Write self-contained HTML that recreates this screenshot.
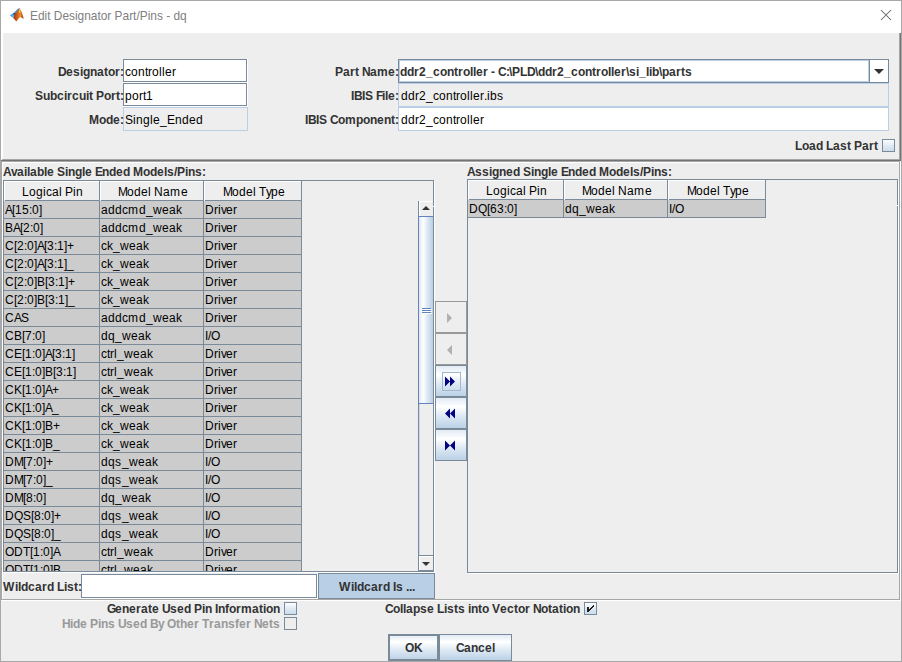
<!DOCTYPE html>
<html><head><meta charset="utf-8"><title>Edit Designator Part/Pins - dq</title>
<style>
html,body{margin:0;padding:0;width:902px;height:662px;overflow:hidden;background:#eeeeee}
.a{position:absolute;box-sizing:border-box}
.t{position:absolute;white-space:pre;font-family:"Liberation Sans",sans-serif;font-size:12px;line-height:1.117}
.t i{font-style:normal;display:inline-block}
.w1{width:1px}.w2{width:2px}.w3{width:3px}.w4{width:4px}.w5{width:5px}.w6{width:6px}.w7{width:7px}.w8{width:8px}.w9{width:9px}.w10{width:10px}.w11{width:11px}.w12{width:12px}.w13{width:13px}.w14{width:14px}.w15{width:15px}.w16{width:16px}.w17{width:17px}.w18{width:18px}.w19{width:19px}
</style></head><body>
<div class="a" style="left:0px;top:0px;width:902px;height:662px;background:#eeeeee"></div>
<div class="a" style="left:0px;top:0px;width:902px;height:33px;background:#ffffff"></div>
<div class="a" style="left:0px;top:0px;width:902px;height:1px;background:#a8a8a8"></div>
<div class="a" style="left:0px;top:661px;width:902px;height:1px;background:#a8a8a8"></div>
<div class="a" style="left:0px;top:0px;width:1px;height:662px;background:#a8a8a8"></div>
<div class="a" style="left:901px;top:0px;width:1px;height:662px;background:#a8a8a8"></div>
<svg class="a" style="left:6px;top:5px" width="22" height="20" viewBox="0 0 22 20">
<defs>
<linearGradient id="mb" x1="0" y1="0" x2="1" y2="0"><stop offset="0" stop-color="#9c3416"/><stop offset="0.4" stop-color="#d2601c"/><stop offset="0.68" stop-color="#e8922a"/><stop offset="0.85" stop-color="#c8501a"/><stop offset="1" stop-color="#a83414"/></linearGradient>
<linearGradient id="mw" x1="0" y1="1" x2="1" y2="0"><stop offset="0" stop-color="#6cc6f2"/><stop offset="0.5" stop-color="#3a8fd6"/><stop offset="1" stop-color="#2a6fc0"/></linearGradient>
</defs>
<path d="M7.1 12.8 L10.3 16.6 L13.9 12.1 L17.8 13.8 L15.7 7 L13.6 3.1 L8.5 8.8 Z" fill="url(#mb)"/>
<path d="M3.6 10.4 L8.2 7.6 L11.5 4.2 L13.6 3.1 L12.6 4.8 L8.5 8.8 L7.1 12.8 Z" fill="url(#mw)"/>
<path d="M7.6 8.2 L9.3 7.9 L8.6 9.8 L7.5 9.6 Z" fill="#1c2f66"/>
<path d="M13.3 4.2 L14.2 4.6 L14.1 8 L13.2 7.6 Z" fill="#f6dc3a"/>
</svg>
<div class="t" style="left:30px;top:10px;font-size:11.9px;color:#808080;letter-spacing:0">Edit Designator Part/Pins - dq</div>
<svg class="a" style="left:880px;top:9px" width="12" height="12" viewBox="0 0 12 12"><path d="M1 1 L11 11 M11 1 L1 11" stroke="#666" stroke-width="1.05"/></svg>
<div class="a" style="left:1px;top:33px;width:1px;height:128px;background:#ffffff"></div>
<div class="a" style="left:2px;top:33px;width:1px;height:127px;background:#ffffff"></div>
<div class="a" style="left:2px;top:159px;width:899px;height:1px;background:#a6a6a6"></div>
<div class="a" style="left:1px;top:160px;width:900px;height:1px;background:#747474"></div>
<div class="a" style="left:899px;top:33px;width:1px;height:127px;background:#a6a6a6"></div>
<div class="a" style="left:900px;top:33px;width:1px;height:128px;background:#747474"></div>
<div class="a" style="left:123px;top:59px;width:125px;height:24px;background:#ffffff"></div>
<div class="a" style="left:123px;top:59px;width:124px;height:23px;box-shadow:inset 0 0 0 1px #7a8a99"></div>
<div class="a" style="left:247px;top:60px;width:1px;height:23px;background:#ffffff"></div>
<div class="a" style="left:124px;top:82px;width:124px;height:1px;background:#ffffff"></div>
<div class="a" style="left:123px;top:83px;width:125px;height:24px;background:#ffffff"></div>
<div class="a" style="left:123px;top:83px;width:124px;height:23px;box-shadow:inset 0 0 0 1px #7a8a99"></div>
<div class="a" style="left:247px;top:84px;width:1px;height:23px;background:#ffffff"></div>
<div class="a" style="left:124px;top:106px;width:124px;height:1px;background:#ffffff"></div>
<div class="a" style="left:123px;top:107px;width:125px;height:24px;background:#eeeeee"></div>
<div class="a" style="left:123px;top:107px;width:125px;height:24px;box-shadow:inset 0 0 0 1px #b8cfe5"></div>
<div class="t" style="left:58px;top:66px;font-weight:bold;color:#333333"><i class="w8">D</i><i class="w7">e</i><i class="w7">s</i><i class="w3">i</i><i class="w7">g</i><i class="w7">n</i><i class="w7">a</i><i class="w4">t</i><i class="w7">o</i><i class="w5">r</i><i class="w3">:</i></div>
<div class="t" style="left:35px;top:90px;font-weight:bold;color:#333333"><i class="w8">S</i><i class="w7">u</i><i class="w7">b</i><i class="w7">c</i><i class="w3">i</i><i class="w5">r</i><i class="w7">c</i><i class="w7">u</i><i class="w3">i</i><i class="w4">t</i><i class="w3"> </i><i class="w8">P</i><i class="w7">o</i><i class="w5">r</i><i class="w4">t</i><i class="w3">:</i></div>
<div class="t" style="left:89px;top:114px;font-weight:bold;color:#333333"><i class="w10">M</i><i class="w7">o</i><i class="w7">d</i><i class="w7">e</i><i class="w3">:</i></div>
<div class="t" style="left:125px;top:66px;font-weight:normal;color:#000"><i class="w6">c</i><i class="w7">o</i><i class="w7">n</i><i class="w3">t</i><i class="w4">r</i><i class="w7">o</i><i class="w3">l</i><i class="w3">l</i><i class="w7">e</i><i class="w4">r</i></div>
<div class="t" style="left:125px;top:90px;font-weight:normal;color:#000"><i class="w7">p</i><i class="w7">o</i><i class="w4">r</i><i class="w3">t</i><i class="w7">1</i></div>
<div class="t" style="left:125px;top:114px;font-weight:normal;color:#000"><i class="w8">S</i><i class="w3">i</i><i class="w7">n</i><i class="w7">g</i><i class="w3">l</i><i class="w7">e</i><i class="w7">_</i><i class="w8">E</i><i class="w7">n</i><i class="w7">d</i><i class="w7">e</i><i class="w7">d</i></div>
<div class="a" style="left:398px;top:59px;width:491px;height:24px;background:#ffffff"></div>
<div class="a" style="left:398px;top:59px;width:491px;height:24px;box-shadow:inset 0 0 0 1px #7a8a99"></div>
<div class="a" style="left:399px;top:60px;width:470px;height:22px;box-shadow:inset 0 0 0 1px #b8cfe5"></div>
<div class="a" style="left:869px;top:60px;width:1px;height:22px;background:#7a8a99"></div>
<svg class="a" style="left:874px;top:69px" width="10" height="5" viewBox="0 0 10 5"><path d="M0 0 H10 L5 5 Z" fill="#333"/></svg>
<div class="a" style="left:398px;top:83px;width:491px;height:24px;background:#eeeeee"></div>
<div class="a" style="left:398px;top:83px;width:491px;height:24px;box-shadow:inset 0 0 0 1px #b8cfe5"></div>
<div class="a" style="left:398px;top:107px;width:491px;height:24px;background:#ffffff"></div>
<div class="a" style="left:398px;top:107px;width:491px;height:24px;box-shadow:inset 0 0 0 1px #b8cfe5"></div>
<div class="t" style="left:335px;top:66px;font-weight:bold;color:#333333"><i class="w8">P</i><i class="w7">a</i><i class="w5">r</i><i class="w4">t</i><i class="w3"> </i><i class="w8">N</i><i class="w7">a</i><i class="w11">m</i><i class="w7">e</i><i class="w3">:</i></div>
<div class="t" style="left:351px;top:90px;font-weight:bold;color:#333333"><i class="w3">I</i><i class="w8">B</i><i class="w3">I</i><i class="w8">S</i><i class="w3"> </i><i class="w6">F</i><i class="w3">i</i><i class="w3">l</i><i class="w7">e</i><i class="w3">:</i></div>
<div class="t" style="left:305px;top:114px;font-weight:bold;color:#333333"><i class="w3">I</i><i class="w8">B</i><i class="w3">I</i><i class="w8">S</i><i class="w3"> </i><i class="w8">C</i><i class="w7">o</i><i class="w11">m</i><i class="w7">p</i><i class="w7">o</i><i class="w7">n</i><i class="w7">e</i><i class="w7">n</i><i class="w4">t</i><i class="w3">:</i></div>
<div class="t" style="left:400px;top:66px;font-weight:bold;color:#333333"><i class="w7">d</i><i class="w7">d</i><i class="w5">r</i><i class="w7">2</i><i class="w7">_</i><i class="w7">c</i><i class="w7">o</i><i class="w7">n</i><i class="w4">t</i><i class="w5">r</i><i class="w7">o</i><i class="w3">l</i><i class="w3">l</i><i class="w7">e</i><i class="w5">r</i><i class="w3"> </i><i class="w4">-</i><i class="w3"> </i><i class="w8">C</i><i class="w3">:</i><i class="w3">\</i><i class="w8">P</i><i class="w7">L</i><i class="w8">D</i><i class="w3">\</i><i class="w7">d</i><i class="w7">d</i><i class="w5">r</i><i class="w7">2</i><i class="w7">_</i><i class="w7">c</i><i class="w7">o</i><i class="w7">n</i><i class="w4">t</i><i class="w5">r</i><i class="w7">o</i><i class="w3">l</i><i class="w3">l</i><i class="w7">e</i><i class="w5">r</i><i class="w3">\</i><i class="w7">s</i><i class="w3">i</i><i class="w7">_</i><i class="w3">l</i><i class="w3">i</i><i class="w7">b</i><i class="w3">\</i><i class="w7">p</i><i class="w7">a</i><i class="w5">r</i><i class="w4">t</i><i class="w7">s</i></div>
<div class="t" style="left:401px;top:90px;font-weight:normal;color:#000"><i class="w7">d</i><i class="w7">d</i><i class="w4">r</i><i class="w7">2</i><i class="w7">_</i><i class="w6">c</i><i class="w7">o</i><i class="w7">n</i><i class="w3">t</i><i class="w4">r</i><i class="w7">o</i><i class="w3">l</i><i class="w3">l</i><i class="w7">e</i><i class="w4">r</i><i class="w3">.</i><i class="w3">i</i><i class="w7">b</i><i class="w7">s</i></div>
<div class="t" style="left:401px;top:114px;font-weight:normal;color:#000"><i class="w7">d</i><i class="w7">d</i><i class="w4">r</i><i class="w7">2</i><i class="w7">_</i><i class="w6">c</i><i class="w7">o</i><i class="w7">n</i><i class="w3">t</i><i class="w4">r</i><i class="w7">o</i><i class="w3">l</i><i class="w3">l</i><i class="w7">e</i><i class="w4">r</i></div>
<div class="t" style="left:795px;top:140px;font-weight:bold;color:#333333"><i class="w7">L</i><i class="w7">o</i><i class="w7">a</i><i class="w7">d</i><i class="w3"> </i><i class="w7">L</i><i class="w7">a</i><i class="w7">s</i><i class="w4">t</i><i class="w3"> </i><i class="w8">P</i><i class="w7">a</i><i class="w5">r</i><i class="w4">t</i></div>
<div class="a" style="left:882px;top:139px;width:13px;height:13px;background:linear-gradient(#ffffff 0%, #f4f8fc 20%, #dde8f3 55%, #c8daec 100%)"></div>
<div class="a" style="left:882px;top:139px;width:13px;height:13px;box-shadow:inset 0 0 0 1px #7a8a99"></div>
<div class="a" style="left:1px;top:161px;width:1px;height:440px;background:#a6a6a6"></div>
<div class="a" style="left:2px;top:162px;width:1px;height:438px;background:#ffffff"></div>
<div class="a" style="left:1px;top:161px;width:899px;height:1px;background:#a6a6a6"></div>
<div class="a" style="left:2px;top:162px;width:897px;height:1px;background:#ffffff"></div>
<div class="a" style="left:2px;top:599px;width:898px;height:1px;background:#a6a6a6"></div>
<div class="a" style="left:1px;top:600px;width:900px;height:1px;background:#ffffff"></div>
<div class="a" style="left:899px;top:161px;width:1px;height:439px;background:#a6a6a6"></div>
<div class="a" style="left:900px;top:161px;width:1px;height:440px;background:#ffffff"></div>
<div class="t" style="left:3px;top:166px;font-weight:bold;color:#333333"><i class="w8">A</i><i class="w6">v</i><i class="w7">a</i><i class="w3">i</i><i class="w3">l</i><i class="w7">a</i><i class="w7">b</i><i class="w3">l</i><i class="w7">e</i><i class="w3"> </i><i class="w8">S</i><i class="w3">i</i><i class="w7">n</i><i class="w7">g</i><i class="w3">l</i><i class="w7">e</i><i class="w3"> </i><i class="w7">E</i><i class="w7">n</i><i class="w7">d</i><i class="w7">e</i><i class="w7">d</i><i class="w3"> </i><i class="w10">M</i><i class="w7">o</i><i class="w7">d</i><i class="w7">e</i><i class="w3">l</i><i class="w7">s</i><i class="w3">/</i><i class="w8">P</i><i class="w3">i</i><i class="w7">n</i><i class="w7">s</i><i class="w3">:</i></div>
<div class="t" style="left:467px;top:166px;font-weight:bold;color:#333333"><i class="w8">A</i><i class="w7">s</i><i class="w7">s</i><i class="w3">i</i><i class="w7">g</i><i class="w7">n</i><i class="w7">e</i><i class="w7">d</i><i class="w3"> </i><i class="w8">S</i><i class="w3">i</i><i class="w7">n</i><i class="w7">g</i><i class="w3">l</i><i class="w7">e</i><i class="w3"> </i><i class="w7">E</i><i class="w7">n</i><i class="w7">d</i><i class="w7">e</i><i class="w7">d</i><i class="w3"> </i><i class="w10">M</i><i class="w7">o</i><i class="w7">d</i><i class="w7">e</i><i class="w3">l</i><i class="w7">s</i><i class="w3">/</i><i class="w8">P</i><i class="w3">i</i><i class="w7">n</i><i class="w7">s</i><i class="w3">:</i></div>
<div class="a" style="left:4px;top:181px;width:414px;height:390px;overflow:hidden;background:#eeeeee"><div class="a" style="left:-4px;top:-181px;width:902px;height:662px">
<div class="a" style="left:4px;top:181px;width:96px;height:20px;background:#eeeeee"></div>
<div class="a" style="left:4px;top:181px;width:95px;height:1px;background:#ffffff"></div>
<div class="a" style="left:4px;top:181px;width:1px;height:19px;background:#ffffff"></div>
<div class="a" style="left:99px;top:181px;width:1px;height:20px;background:#7a8a99"></div>
<div class="a" style="left:5px;top:200px;width:95px;height:1px;background:#7a8a99"></div>
<div class="t" style="left:22px;top:186px;font-weight:normal;color:#000"><i class="w7">L</i><i class="w7">o</i><i class="w7">g</i><i class="w3">i</i><i class="w6">c</i><i class="w7">a</i><i class="w3">l</i><i class="w3"> </i><i class="w8">P</i><i class="w3">i</i><i class="w7">n</i></div>
<div class="a" style="left:100px;top:181px;width:104px;height:20px;background:#eeeeee"></div>
<div class="a" style="left:100px;top:181px;width:103px;height:1px;background:#ffffff"></div>
<div class="a" style="left:100px;top:181px;width:1px;height:19px;background:#ffffff"></div>
<div class="a" style="left:203px;top:181px;width:1px;height:20px;background:#7a8a99"></div>
<div class="a" style="left:101px;top:200px;width:103px;height:1px;background:#7a8a99"></div>
<div class="t" style="left:118px;top:186px;font-weight:normal;color:#000"><i class="w9">M</i><i class="w7">o</i><i class="w7">d</i><i class="w7">e</i><i class="w3">l</i><i class="w3"> </i><i class="w9">N</i><i class="w7">a</i><i class="w11">m</i><i class="w7">e</i></div>
<div class="a" style="left:204px;top:181px;width:98px;height:20px;background:#eeeeee"></div>
<div class="a" style="left:204px;top:181px;width:97px;height:1px;background:#ffffff"></div>
<div class="a" style="left:204px;top:181px;width:1px;height:19px;background:#ffffff"></div>
<div class="a" style="left:301px;top:181px;width:1px;height:20px;background:#7a8a99"></div>
<div class="a" style="left:205px;top:200px;width:97px;height:1px;background:#7a8a99"></div>
<div class="t" style="left:223px;top:186px;font-weight:normal;color:#000"><i class="w9">M</i><i class="w7">o</i><i class="w7">d</i><i class="w7">e</i><i class="w3">l</i><i class="w3"> </i><i class="w7">T</i><i class="w5">y</i><i class="w7">p</i><i class="w7">e</i></div>
<div class="a" style="left:4px;top:201px;width:96px;height:18px;background:#cccccc"></div>
<div class="a" style="left:99px;top:201px;width:1px;height:18px;background:#7a8a99"></div>
<div class="a" style="left:4px;top:218px;width:96px;height:1px;background:#7a8a99"></div>
<div class="t" style="left:5px;top:204px;font-weight:normal;color:#000"><i class="w7">A</i><i class="w3">[</i><i class="w7">1</i><i class="w7">5</i><i class="w3">:</i><i class="w7">0</i><i class="w3">]</i></div>
<div class="a" style="left:100px;top:201px;width:104px;height:18px;background:#cccccc"></div>
<div class="a" style="left:203px;top:201px;width:1px;height:18px;background:#7a8a99"></div>
<div class="a" style="left:100px;top:218px;width:104px;height:1px;background:#7a8a99"></div>
<div class="t" style="left:101px;top:204px;font-weight:normal;color:#000"><i class="w7">a</i><i class="w7">d</i><i class="w7">d</i><i class="w6">c</i><i class="w11">m</i><i class="w7">d</i><i class="w7">_</i><i class="w9">w</i><i class="w7">e</i><i class="w7">a</i><i class="w6">k</i></div>
<div class="a" style="left:204px;top:201px;width:98px;height:18px;background:#cccccc"></div>
<div class="a" style="left:301px;top:201px;width:1px;height:18px;background:#7a8a99"></div>
<div class="a" style="left:204px;top:218px;width:98px;height:1px;background:#7a8a99"></div>
<div class="t" style="left:205px;top:204px;font-weight:normal;color:#000"><i class="w9">D</i><i class="w4">r</i><i class="w3">i</i><i class="w5">v</i><i class="w7">e</i><i class="w4">r</i></div>
<div class="a" style="left:4px;top:219px;width:96px;height:18px;background:#cccccc"></div>
<div class="a" style="left:99px;top:219px;width:1px;height:18px;background:#7a8a99"></div>
<div class="a" style="left:4px;top:236px;width:96px;height:1px;background:#7a8a99"></div>
<div class="t" style="left:5px;top:222px;font-weight:normal;color:#000"><i class="w8">B</i><i class="w7">A</i><i class="w3">[</i><i class="w7">2</i><i class="w3">:</i><i class="w7">0</i><i class="w3">]</i></div>
<div class="a" style="left:100px;top:219px;width:104px;height:18px;background:#cccccc"></div>
<div class="a" style="left:203px;top:219px;width:1px;height:18px;background:#7a8a99"></div>
<div class="a" style="left:100px;top:236px;width:104px;height:1px;background:#7a8a99"></div>
<div class="t" style="left:101px;top:222px;font-weight:normal;color:#000"><i class="w7">a</i><i class="w7">d</i><i class="w7">d</i><i class="w6">c</i><i class="w11">m</i><i class="w7">d</i><i class="w7">_</i><i class="w9">w</i><i class="w7">e</i><i class="w7">a</i><i class="w6">k</i></div>
<div class="a" style="left:204px;top:219px;width:98px;height:18px;background:#cccccc"></div>
<div class="a" style="left:301px;top:219px;width:1px;height:18px;background:#7a8a99"></div>
<div class="a" style="left:204px;top:236px;width:98px;height:1px;background:#7a8a99"></div>
<div class="t" style="left:205px;top:222px;font-weight:normal;color:#000"><i class="w9">D</i><i class="w4">r</i><i class="w3">i</i><i class="w5">v</i><i class="w7">e</i><i class="w4">r</i></div>
<div class="a" style="left:4px;top:237px;width:96px;height:18px;background:#cccccc"></div>
<div class="a" style="left:99px;top:237px;width:1px;height:18px;background:#7a8a99"></div>
<div class="a" style="left:4px;top:254px;width:96px;height:1px;background:#7a8a99"></div>
<div class="t" style="left:5px;top:240px;font-weight:normal;color:#000"><i class="w9">C</i><i class="w3">[</i><i class="w7">2</i><i class="w3">:</i><i class="w7">0</i><i class="w3">]</i><i class="w7">A</i><i class="w3">[</i><i class="w7">3</i><i class="w3">:</i><i class="w7">1</i><i class="w3">]</i><i class="w7">+</i></div>
<div class="a" style="left:100px;top:237px;width:104px;height:18px;background:#cccccc"></div>
<div class="a" style="left:203px;top:237px;width:1px;height:18px;background:#7a8a99"></div>
<div class="a" style="left:100px;top:254px;width:104px;height:1px;background:#7a8a99"></div>
<div class="t" style="left:101px;top:240px;font-weight:normal;color:#000"><i class="w6">c</i><i class="w6">k</i><i class="w7">_</i><i class="w9">w</i><i class="w7">e</i><i class="w7">a</i><i class="w6">k</i></div>
<div class="a" style="left:204px;top:237px;width:98px;height:18px;background:#cccccc"></div>
<div class="a" style="left:301px;top:237px;width:1px;height:18px;background:#7a8a99"></div>
<div class="a" style="left:204px;top:254px;width:98px;height:1px;background:#7a8a99"></div>
<div class="t" style="left:205px;top:240px;font-weight:normal;color:#000"><i class="w9">D</i><i class="w4">r</i><i class="w3">i</i><i class="w5">v</i><i class="w7">e</i><i class="w4">r</i></div>
<div class="a" style="left:4px;top:255px;width:96px;height:18px;background:#cccccc"></div>
<div class="a" style="left:99px;top:255px;width:1px;height:18px;background:#7a8a99"></div>
<div class="a" style="left:4px;top:272px;width:96px;height:1px;background:#7a8a99"></div>
<div class="t" style="left:5px;top:258px;font-weight:normal;color:#000"><i class="w9">C</i><i class="w3">[</i><i class="w7">2</i><i class="w3">:</i><i class="w7">0</i><i class="w3">]</i><i class="w7">A</i><i class="w3">[</i><i class="w7">3</i><i class="w3">:</i><i class="w7">1</i><i class="w3">]</i><i class="w7">_</i></div>
<div class="a" style="left:100px;top:255px;width:104px;height:18px;background:#cccccc"></div>
<div class="a" style="left:203px;top:255px;width:1px;height:18px;background:#7a8a99"></div>
<div class="a" style="left:100px;top:272px;width:104px;height:1px;background:#7a8a99"></div>
<div class="t" style="left:101px;top:258px;font-weight:normal;color:#000"><i class="w6">c</i><i class="w6">k</i><i class="w7">_</i><i class="w9">w</i><i class="w7">e</i><i class="w7">a</i><i class="w6">k</i></div>
<div class="a" style="left:204px;top:255px;width:98px;height:18px;background:#cccccc"></div>
<div class="a" style="left:301px;top:255px;width:1px;height:18px;background:#7a8a99"></div>
<div class="a" style="left:204px;top:272px;width:98px;height:1px;background:#7a8a99"></div>
<div class="t" style="left:205px;top:258px;font-weight:normal;color:#000"><i class="w9">D</i><i class="w4">r</i><i class="w3">i</i><i class="w5">v</i><i class="w7">e</i><i class="w4">r</i></div>
<div class="a" style="left:4px;top:273px;width:96px;height:18px;background:#cccccc"></div>
<div class="a" style="left:99px;top:273px;width:1px;height:18px;background:#7a8a99"></div>
<div class="a" style="left:4px;top:290px;width:96px;height:1px;background:#7a8a99"></div>
<div class="t" style="left:5px;top:276px;font-weight:normal;color:#000"><i class="w9">C</i><i class="w3">[</i><i class="w7">2</i><i class="w3">:</i><i class="w7">0</i><i class="w3">]</i><i class="w8">B</i><i class="w3">[</i><i class="w7">3</i><i class="w3">:</i><i class="w7">1</i><i class="w3">]</i><i class="w7">+</i></div>
<div class="a" style="left:100px;top:273px;width:104px;height:18px;background:#cccccc"></div>
<div class="a" style="left:203px;top:273px;width:1px;height:18px;background:#7a8a99"></div>
<div class="a" style="left:100px;top:290px;width:104px;height:1px;background:#7a8a99"></div>
<div class="t" style="left:101px;top:276px;font-weight:normal;color:#000"><i class="w6">c</i><i class="w6">k</i><i class="w7">_</i><i class="w9">w</i><i class="w7">e</i><i class="w7">a</i><i class="w6">k</i></div>
<div class="a" style="left:204px;top:273px;width:98px;height:18px;background:#cccccc"></div>
<div class="a" style="left:301px;top:273px;width:1px;height:18px;background:#7a8a99"></div>
<div class="a" style="left:204px;top:290px;width:98px;height:1px;background:#7a8a99"></div>
<div class="t" style="left:205px;top:276px;font-weight:normal;color:#000"><i class="w9">D</i><i class="w4">r</i><i class="w3">i</i><i class="w5">v</i><i class="w7">e</i><i class="w4">r</i></div>
<div class="a" style="left:4px;top:291px;width:96px;height:18px;background:#cccccc"></div>
<div class="a" style="left:99px;top:291px;width:1px;height:18px;background:#7a8a99"></div>
<div class="a" style="left:4px;top:308px;width:96px;height:1px;background:#7a8a99"></div>
<div class="t" style="left:5px;top:294px;font-weight:normal;color:#000"><i class="w9">C</i><i class="w3">[</i><i class="w7">2</i><i class="w3">:</i><i class="w7">0</i><i class="w3">]</i><i class="w8">B</i><i class="w3">[</i><i class="w7">3</i><i class="w3">:</i><i class="w7">1</i><i class="w3">]</i><i class="w7">_</i></div>
<div class="a" style="left:100px;top:291px;width:104px;height:18px;background:#cccccc"></div>
<div class="a" style="left:203px;top:291px;width:1px;height:18px;background:#7a8a99"></div>
<div class="a" style="left:100px;top:308px;width:104px;height:1px;background:#7a8a99"></div>
<div class="t" style="left:101px;top:294px;font-weight:normal;color:#000"><i class="w6">c</i><i class="w6">k</i><i class="w7">_</i><i class="w9">w</i><i class="w7">e</i><i class="w7">a</i><i class="w6">k</i></div>
<div class="a" style="left:204px;top:291px;width:98px;height:18px;background:#cccccc"></div>
<div class="a" style="left:301px;top:291px;width:1px;height:18px;background:#7a8a99"></div>
<div class="a" style="left:204px;top:308px;width:98px;height:1px;background:#7a8a99"></div>
<div class="t" style="left:205px;top:294px;font-weight:normal;color:#000"><i class="w9">D</i><i class="w4">r</i><i class="w3">i</i><i class="w5">v</i><i class="w7">e</i><i class="w4">r</i></div>
<div class="a" style="left:4px;top:309px;width:96px;height:18px;background:#cccccc"></div>
<div class="a" style="left:99px;top:309px;width:1px;height:18px;background:#7a8a99"></div>
<div class="a" style="left:4px;top:326px;width:96px;height:1px;background:#7a8a99"></div>
<div class="t" style="left:5px;top:312px;font-weight:normal;color:#000"><i class="w9">C</i><i class="w7">A</i><i class="w8">S</i></div>
<div class="a" style="left:100px;top:309px;width:104px;height:18px;background:#cccccc"></div>
<div class="a" style="left:203px;top:309px;width:1px;height:18px;background:#7a8a99"></div>
<div class="a" style="left:100px;top:326px;width:104px;height:1px;background:#7a8a99"></div>
<div class="t" style="left:101px;top:312px;font-weight:normal;color:#000"><i class="w7">a</i><i class="w7">d</i><i class="w7">d</i><i class="w6">c</i><i class="w11">m</i><i class="w7">d</i><i class="w7">_</i><i class="w9">w</i><i class="w7">e</i><i class="w7">a</i><i class="w6">k</i></div>
<div class="a" style="left:204px;top:309px;width:98px;height:18px;background:#cccccc"></div>
<div class="a" style="left:301px;top:309px;width:1px;height:18px;background:#7a8a99"></div>
<div class="a" style="left:204px;top:326px;width:98px;height:1px;background:#7a8a99"></div>
<div class="t" style="left:205px;top:312px;font-weight:normal;color:#000"><i class="w9">D</i><i class="w4">r</i><i class="w3">i</i><i class="w5">v</i><i class="w7">e</i><i class="w4">r</i></div>
<div class="a" style="left:4px;top:327px;width:96px;height:18px;background:#cccccc"></div>
<div class="a" style="left:99px;top:327px;width:1px;height:18px;background:#7a8a99"></div>
<div class="a" style="left:4px;top:344px;width:96px;height:1px;background:#7a8a99"></div>
<div class="t" style="left:5px;top:330px;font-weight:normal;color:#000"><i class="w9">C</i><i class="w8">B</i><i class="w3">[</i><i class="w7">7</i><i class="w3">:</i><i class="w7">0</i><i class="w3">]</i></div>
<div class="a" style="left:100px;top:327px;width:104px;height:18px;background:#cccccc"></div>
<div class="a" style="left:203px;top:327px;width:1px;height:18px;background:#7a8a99"></div>
<div class="a" style="left:100px;top:344px;width:104px;height:1px;background:#7a8a99"></div>
<div class="t" style="left:101px;top:330px;font-weight:normal;color:#000"><i class="w7">d</i><i class="w7">q</i><i class="w7">_</i><i class="w9">w</i><i class="w7">e</i><i class="w7">a</i><i class="w6">k</i></div>
<div class="a" style="left:204px;top:327px;width:98px;height:18px;background:#cccccc"></div>
<div class="a" style="left:301px;top:327px;width:1px;height:18px;background:#7a8a99"></div>
<div class="a" style="left:204px;top:344px;width:98px;height:1px;background:#7a8a99"></div>
<div class="t" style="left:205px;top:330px;font-weight:normal;color:#000"><i class="w3">I</i><i class="w3">/</i><i class="w9">O</i></div>
<div class="a" style="left:4px;top:345px;width:96px;height:18px;background:#cccccc"></div>
<div class="a" style="left:99px;top:345px;width:1px;height:18px;background:#7a8a99"></div>
<div class="a" style="left:4px;top:362px;width:96px;height:1px;background:#7a8a99"></div>
<div class="t" style="left:5px;top:348px;font-weight:normal;color:#000"><i class="w9">C</i><i class="w8">E</i><i class="w3">[</i><i class="w7">1</i><i class="w3">:</i><i class="w7">0</i><i class="w3">]</i><i class="w7">A</i><i class="w3">[</i><i class="w7">3</i><i class="w3">:</i><i class="w7">1</i><i class="w3">]</i></div>
<div class="a" style="left:100px;top:345px;width:104px;height:18px;background:#cccccc"></div>
<div class="a" style="left:203px;top:345px;width:1px;height:18px;background:#7a8a99"></div>
<div class="a" style="left:100px;top:362px;width:104px;height:1px;background:#7a8a99"></div>
<div class="t" style="left:101px;top:348px;font-weight:normal;color:#000"><i class="w6">c</i><i class="w3">t</i><i class="w4">r</i><i class="w3">l</i><i class="w7">_</i><i class="w9">w</i><i class="w7">e</i><i class="w7">a</i><i class="w6">k</i></div>
<div class="a" style="left:204px;top:345px;width:98px;height:18px;background:#cccccc"></div>
<div class="a" style="left:301px;top:345px;width:1px;height:18px;background:#7a8a99"></div>
<div class="a" style="left:204px;top:362px;width:98px;height:1px;background:#7a8a99"></div>
<div class="t" style="left:205px;top:348px;font-weight:normal;color:#000"><i class="w9">D</i><i class="w4">r</i><i class="w3">i</i><i class="w5">v</i><i class="w7">e</i><i class="w4">r</i></div>
<div class="a" style="left:4px;top:363px;width:96px;height:18px;background:#cccccc"></div>
<div class="a" style="left:99px;top:363px;width:1px;height:18px;background:#7a8a99"></div>
<div class="a" style="left:4px;top:380px;width:96px;height:1px;background:#7a8a99"></div>
<div class="t" style="left:5px;top:366px;font-weight:normal;color:#000"><i class="w9">C</i><i class="w8">E</i><i class="w3">[</i><i class="w7">1</i><i class="w3">:</i><i class="w7">0</i><i class="w3">]</i><i class="w8">B</i><i class="w3">[</i><i class="w7">3</i><i class="w3">:</i><i class="w7">1</i><i class="w3">]</i></div>
<div class="a" style="left:100px;top:363px;width:104px;height:18px;background:#cccccc"></div>
<div class="a" style="left:203px;top:363px;width:1px;height:18px;background:#7a8a99"></div>
<div class="a" style="left:100px;top:380px;width:104px;height:1px;background:#7a8a99"></div>
<div class="t" style="left:101px;top:366px;font-weight:normal;color:#000"><i class="w6">c</i><i class="w3">t</i><i class="w4">r</i><i class="w3">l</i><i class="w7">_</i><i class="w9">w</i><i class="w7">e</i><i class="w7">a</i><i class="w6">k</i></div>
<div class="a" style="left:204px;top:363px;width:98px;height:18px;background:#cccccc"></div>
<div class="a" style="left:301px;top:363px;width:1px;height:18px;background:#7a8a99"></div>
<div class="a" style="left:204px;top:380px;width:98px;height:1px;background:#7a8a99"></div>
<div class="t" style="left:205px;top:366px;font-weight:normal;color:#000"><i class="w9">D</i><i class="w4">r</i><i class="w3">i</i><i class="w5">v</i><i class="w7">e</i><i class="w4">r</i></div>
<div class="a" style="left:4px;top:381px;width:96px;height:18px;background:#cccccc"></div>
<div class="a" style="left:99px;top:381px;width:1px;height:18px;background:#7a8a99"></div>
<div class="a" style="left:4px;top:398px;width:96px;height:1px;background:#7a8a99"></div>
<div class="t" style="left:5px;top:384px;font-weight:normal;color:#000"><i class="w9">C</i><i class="w8">K</i><i class="w3">[</i><i class="w7">1</i><i class="w3">:</i><i class="w7">0</i><i class="w3">]</i><i class="w7">A</i><i class="w7">+</i></div>
<div class="a" style="left:100px;top:381px;width:104px;height:18px;background:#cccccc"></div>
<div class="a" style="left:203px;top:381px;width:1px;height:18px;background:#7a8a99"></div>
<div class="a" style="left:100px;top:398px;width:104px;height:1px;background:#7a8a99"></div>
<div class="t" style="left:101px;top:384px;font-weight:normal;color:#000"><i class="w6">c</i><i class="w6">k</i><i class="w7">_</i><i class="w9">w</i><i class="w7">e</i><i class="w7">a</i><i class="w6">k</i></div>
<div class="a" style="left:204px;top:381px;width:98px;height:18px;background:#cccccc"></div>
<div class="a" style="left:301px;top:381px;width:1px;height:18px;background:#7a8a99"></div>
<div class="a" style="left:204px;top:398px;width:98px;height:1px;background:#7a8a99"></div>
<div class="t" style="left:205px;top:384px;font-weight:normal;color:#000"><i class="w9">D</i><i class="w4">r</i><i class="w3">i</i><i class="w5">v</i><i class="w7">e</i><i class="w4">r</i></div>
<div class="a" style="left:4px;top:399px;width:96px;height:18px;background:#cccccc"></div>
<div class="a" style="left:99px;top:399px;width:1px;height:18px;background:#7a8a99"></div>
<div class="a" style="left:4px;top:416px;width:96px;height:1px;background:#7a8a99"></div>
<div class="t" style="left:5px;top:402px;font-weight:normal;color:#000"><i class="w9">C</i><i class="w8">K</i><i class="w3">[</i><i class="w7">1</i><i class="w3">:</i><i class="w7">0</i><i class="w3">]</i><i class="w7">A</i><i class="w7">_</i></div>
<div class="a" style="left:100px;top:399px;width:104px;height:18px;background:#cccccc"></div>
<div class="a" style="left:203px;top:399px;width:1px;height:18px;background:#7a8a99"></div>
<div class="a" style="left:100px;top:416px;width:104px;height:1px;background:#7a8a99"></div>
<div class="t" style="left:101px;top:402px;font-weight:normal;color:#000"><i class="w6">c</i><i class="w6">k</i><i class="w7">_</i><i class="w9">w</i><i class="w7">e</i><i class="w7">a</i><i class="w6">k</i></div>
<div class="a" style="left:204px;top:399px;width:98px;height:18px;background:#cccccc"></div>
<div class="a" style="left:301px;top:399px;width:1px;height:18px;background:#7a8a99"></div>
<div class="a" style="left:204px;top:416px;width:98px;height:1px;background:#7a8a99"></div>
<div class="t" style="left:205px;top:402px;font-weight:normal;color:#000"><i class="w9">D</i><i class="w4">r</i><i class="w3">i</i><i class="w5">v</i><i class="w7">e</i><i class="w4">r</i></div>
<div class="a" style="left:4px;top:417px;width:96px;height:18px;background:#cccccc"></div>
<div class="a" style="left:99px;top:417px;width:1px;height:18px;background:#7a8a99"></div>
<div class="a" style="left:4px;top:434px;width:96px;height:1px;background:#7a8a99"></div>
<div class="t" style="left:5px;top:420px;font-weight:normal;color:#000"><i class="w9">C</i><i class="w8">K</i><i class="w3">[</i><i class="w7">1</i><i class="w3">:</i><i class="w7">0</i><i class="w3">]</i><i class="w8">B</i><i class="w7">+</i></div>
<div class="a" style="left:100px;top:417px;width:104px;height:18px;background:#cccccc"></div>
<div class="a" style="left:203px;top:417px;width:1px;height:18px;background:#7a8a99"></div>
<div class="a" style="left:100px;top:434px;width:104px;height:1px;background:#7a8a99"></div>
<div class="t" style="left:101px;top:420px;font-weight:normal;color:#000"><i class="w6">c</i><i class="w6">k</i><i class="w7">_</i><i class="w9">w</i><i class="w7">e</i><i class="w7">a</i><i class="w6">k</i></div>
<div class="a" style="left:204px;top:417px;width:98px;height:18px;background:#cccccc"></div>
<div class="a" style="left:301px;top:417px;width:1px;height:18px;background:#7a8a99"></div>
<div class="a" style="left:204px;top:434px;width:98px;height:1px;background:#7a8a99"></div>
<div class="t" style="left:205px;top:420px;font-weight:normal;color:#000"><i class="w9">D</i><i class="w4">r</i><i class="w3">i</i><i class="w5">v</i><i class="w7">e</i><i class="w4">r</i></div>
<div class="a" style="left:4px;top:435px;width:96px;height:18px;background:#cccccc"></div>
<div class="a" style="left:99px;top:435px;width:1px;height:18px;background:#7a8a99"></div>
<div class="a" style="left:4px;top:452px;width:96px;height:1px;background:#7a8a99"></div>
<div class="t" style="left:5px;top:438px;font-weight:normal;color:#000"><i class="w9">C</i><i class="w8">K</i><i class="w3">[</i><i class="w7">1</i><i class="w3">:</i><i class="w7">0</i><i class="w3">]</i><i class="w8">B</i><i class="w7">_</i></div>
<div class="a" style="left:100px;top:435px;width:104px;height:18px;background:#cccccc"></div>
<div class="a" style="left:203px;top:435px;width:1px;height:18px;background:#7a8a99"></div>
<div class="a" style="left:100px;top:452px;width:104px;height:1px;background:#7a8a99"></div>
<div class="t" style="left:101px;top:438px;font-weight:normal;color:#000"><i class="w6">c</i><i class="w6">k</i><i class="w7">_</i><i class="w9">w</i><i class="w7">e</i><i class="w7">a</i><i class="w6">k</i></div>
<div class="a" style="left:204px;top:435px;width:98px;height:18px;background:#cccccc"></div>
<div class="a" style="left:301px;top:435px;width:1px;height:18px;background:#7a8a99"></div>
<div class="a" style="left:204px;top:452px;width:98px;height:1px;background:#7a8a99"></div>
<div class="t" style="left:205px;top:438px;font-weight:normal;color:#000"><i class="w9">D</i><i class="w4">r</i><i class="w3">i</i><i class="w5">v</i><i class="w7">e</i><i class="w4">r</i></div>
<div class="a" style="left:4px;top:453px;width:96px;height:18px;background:#cccccc"></div>
<div class="a" style="left:99px;top:453px;width:1px;height:18px;background:#7a8a99"></div>
<div class="a" style="left:4px;top:470px;width:96px;height:1px;background:#7a8a99"></div>
<div class="t" style="left:5px;top:456px;font-weight:normal;color:#000"><i class="w9">D</i><i class="w9">M</i><i class="w3">[</i><i class="w7">7</i><i class="w3">:</i><i class="w7">0</i><i class="w3">]</i><i class="w7">+</i></div>
<div class="a" style="left:100px;top:453px;width:104px;height:18px;background:#cccccc"></div>
<div class="a" style="left:203px;top:453px;width:1px;height:18px;background:#7a8a99"></div>
<div class="a" style="left:100px;top:470px;width:104px;height:1px;background:#7a8a99"></div>
<div class="t" style="left:101px;top:456px;font-weight:normal;color:#000"><i class="w7">d</i><i class="w7">q</i><i class="w7">s</i><i class="w7">_</i><i class="w9">w</i><i class="w7">e</i><i class="w7">a</i><i class="w6">k</i></div>
<div class="a" style="left:204px;top:453px;width:98px;height:18px;background:#cccccc"></div>
<div class="a" style="left:301px;top:453px;width:1px;height:18px;background:#7a8a99"></div>
<div class="a" style="left:204px;top:470px;width:98px;height:1px;background:#7a8a99"></div>
<div class="t" style="left:205px;top:456px;font-weight:normal;color:#000"><i class="w3">I</i><i class="w3">/</i><i class="w9">O</i></div>
<div class="a" style="left:4px;top:471px;width:96px;height:18px;background:#cccccc"></div>
<div class="a" style="left:99px;top:471px;width:1px;height:18px;background:#7a8a99"></div>
<div class="a" style="left:4px;top:488px;width:96px;height:1px;background:#7a8a99"></div>
<div class="t" style="left:5px;top:474px;font-weight:normal;color:#000"><i class="w9">D</i><i class="w9">M</i><i class="w3">[</i><i class="w7">7</i><i class="w3">:</i><i class="w7">0</i><i class="w3">]</i><i class="w7">_</i></div>
<div class="a" style="left:100px;top:471px;width:104px;height:18px;background:#cccccc"></div>
<div class="a" style="left:203px;top:471px;width:1px;height:18px;background:#7a8a99"></div>
<div class="a" style="left:100px;top:488px;width:104px;height:1px;background:#7a8a99"></div>
<div class="t" style="left:101px;top:474px;font-weight:normal;color:#000"><i class="w7">d</i><i class="w7">q</i><i class="w7">s</i><i class="w7">_</i><i class="w9">w</i><i class="w7">e</i><i class="w7">a</i><i class="w6">k</i></div>
<div class="a" style="left:204px;top:471px;width:98px;height:18px;background:#cccccc"></div>
<div class="a" style="left:301px;top:471px;width:1px;height:18px;background:#7a8a99"></div>
<div class="a" style="left:204px;top:488px;width:98px;height:1px;background:#7a8a99"></div>
<div class="t" style="left:205px;top:474px;font-weight:normal;color:#000"><i class="w3">I</i><i class="w3">/</i><i class="w9">O</i></div>
<div class="a" style="left:4px;top:489px;width:96px;height:18px;background:#cccccc"></div>
<div class="a" style="left:99px;top:489px;width:1px;height:18px;background:#7a8a99"></div>
<div class="a" style="left:4px;top:506px;width:96px;height:1px;background:#7a8a99"></div>
<div class="t" style="left:5px;top:492px;font-weight:normal;color:#000"><i class="w9">D</i><i class="w9">M</i><i class="w3">[</i><i class="w7">8</i><i class="w3">:</i><i class="w7">0</i><i class="w3">]</i></div>
<div class="a" style="left:100px;top:489px;width:104px;height:18px;background:#cccccc"></div>
<div class="a" style="left:203px;top:489px;width:1px;height:18px;background:#7a8a99"></div>
<div class="a" style="left:100px;top:506px;width:104px;height:1px;background:#7a8a99"></div>
<div class="t" style="left:101px;top:492px;font-weight:normal;color:#000"><i class="w7">d</i><i class="w7">q</i><i class="w7">_</i><i class="w9">w</i><i class="w7">e</i><i class="w7">a</i><i class="w6">k</i></div>
<div class="a" style="left:204px;top:489px;width:98px;height:18px;background:#cccccc"></div>
<div class="a" style="left:301px;top:489px;width:1px;height:18px;background:#7a8a99"></div>
<div class="a" style="left:204px;top:506px;width:98px;height:1px;background:#7a8a99"></div>
<div class="t" style="left:205px;top:492px;font-weight:normal;color:#000"><i class="w3">I</i><i class="w3">/</i><i class="w9">O</i></div>
<div class="a" style="left:4px;top:507px;width:96px;height:18px;background:#cccccc"></div>
<div class="a" style="left:99px;top:507px;width:1px;height:18px;background:#7a8a99"></div>
<div class="a" style="left:4px;top:524px;width:96px;height:1px;background:#7a8a99"></div>
<div class="t" style="left:5px;top:510px;font-weight:normal;color:#000"><i class="w9">D</i><i class="w9">Q</i><i class="w8">S</i><i class="w3">[</i><i class="w7">8</i><i class="w3">:</i><i class="w7">0</i><i class="w3">]</i><i class="w7">+</i></div>
<div class="a" style="left:100px;top:507px;width:104px;height:18px;background:#cccccc"></div>
<div class="a" style="left:203px;top:507px;width:1px;height:18px;background:#7a8a99"></div>
<div class="a" style="left:100px;top:524px;width:104px;height:1px;background:#7a8a99"></div>
<div class="t" style="left:101px;top:510px;font-weight:normal;color:#000"><i class="w7">d</i><i class="w7">q</i><i class="w7">s</i><i class="w7">_</i><i class="w9">w</i><i class="w7">e</i><i class="w7">a</i><i class="w6">k</i></div>
<div class="a" style="left:204px;top:507px;width:98px;height:18px;background:#cccccc"></div>
<div class="a" style="left:301px;top:507px;width:1px;height:18px;background:#7a8a99"></div>
<div class="a" style="left:204px;top:524px;width:98px;height:1px;background:#7a8a99"></div>
<div class="t" style="left:205px;top:510px;font-weight:normal;color:#000"><i class="w3">I</i><i class="w3">/</i><i class="w9">O</i></div>
<div class="a" style="left:4px;top:525px;width:96px;height:18px;background:#cccccc"></div>
<div class="a" style="left:99px;top:525px;width:1px;height:18px;background:#7a8a99"></div>
<div class="a" style="left:4px;top:542px;width:96px;height:1px;background:#7a8a99"></div>
<div class="t" style="left:5px;top:528px;font-weight:normal;color:#000"><i class="w9">D</i><i class="w9">Q</i><i class="w8">S</i><i class="w3">[</i><i class="w7">8</i><i class="w3">:</i><i class="w7">0</i><i class="w3">]</i><i class="w7">_</i></div>
<div class="a" style="left:100px;top:525px;width:104px;height:18px;background:#cccccc"></div>
<div class="a" style="left:203px;top:525px;width:1px;height:18px;background:#7a8a99"></div>
<div class="a" style="left:100px;top:542px;width:104px;height:1px;background:#7a8a99"></div>
<div class="t" style="left:101px;top:528px;font-weight:normal;color:#000"><i class="w7">d</i><i class="w7">q</i><i class="w7">s</i><i class="w7">_</i><i class="w9">w</i><i class="w7">e</i><i class="w7">a</i><i class="w6">k</i></div>
<div class="a" style="left:204px;top:525px;width:98px;height:18px;background:#cccccc"></div>
<div class="a" style="left:301px;top:525px;width:1px;height:18px;background:#7a8a99"></div>
<div class="a" style="left:204px;top:542px;width:98px;height:1px;background:#7a8a99"></div>
<div class="t" style="left:205px;top:528px;font-weight:normal;color:#000"><i class="w3">I</i><i class="w3">/</i><i class="w9">O</i></div>
<div class="a" style="left:4px;top:543px;width:96px;height:18px;background:#cccccc"></div>
<div class="a" style="left:99px;top:543px;width:1px;height:18px;background:#7a8a99"></div>
<div class="a" style="left:4px;top:560px;width:96px;height:1px;background:#7a8a99"></div>
<div class="t" style="left:5px;top:546px;font-weight:normal;color:#000"><i class="w9">O</i><i class="w9">D</i><i class="w7">T</i><i class="w3">[</i><i class="w7">1</i><i class="w3">:</i><i class="w7">0</i><i class="w3">]</i><i class="w7">A</i></div>
<div class="a" style="left:100px;top:543px;width:104px;height:18px;background:#cccccc"></div>
<div class="a" style="left:203px;top:543px;width:1px;height:18px;background:#7a8a99"></div>
<div class="a" style="left:100px;top:560px;width:104px;height:1px;background:#7a8a99"></div>
<div class="t" style="left:101px;top:546px;font-weight:normal;color:#000"><i class="w6">c</i><i class="w3">t</i><i class="w4">r</i><i class="w3">l</i><i class="w7">_</i><i class="w9">w</i><i class="w7">e</i><i class="w7">a</i><i class="w6">k</i></div>
<div class="a" style="left:204px;top:543px;width:98px;height:18px;background:#cccccc"></div>
<div class="a" style="left:301px;top:543px;width:1px;height:18px;background:#7a8a99"></div>
<div class="a" style="left:204px;top:560px;width:98px;height:1px;background:#7a8a99"></div>
<div class="t" style="left:205px;top:546px;font-weight:normal;color:#000"><i class="w9">D</i><i class="w4">r</i><i class="w3">i</i><i class="w5">v</i><i class="w7">e</i><i class="w4">r</i></div>
<div class="a" style="left:4px;top:561px;width:96px;height:18px;background:#cccccc"></div>
<div class="a" style="left:99px;top:561px;width:1px;height:18px;background:#7a8a99"></div>
<div class="a" style="left:4px;top:578px;width:96px;height:1px;background:#7a8a99"></div>
<div class="t" style="left:5px;top:564px;font-weight:normal;color:#000"><i class="w9">O</i><i class="w9">D</i><i class="w7">T</i><i class="w3">[</i><i class="w7">1</i><i class="w3">:</i><i class="w7">0</i><i class="w3">]</i><i class="w8">B</i></div>
<div class="a" style="left:100px;top:561px;width:104px;height:18px;background:#cccccc"></div>
<div class="a" style="left:203px;top:561px;width:1px;height:18px;background:#7a8a99"></div>
<div class="a" style="left:100px;top:578px;width:104px;height:1px;background:#7a8a99"></div>
<div class="t" style="left:101px;top:564px;font-weight:normal;color:#000"><i class="w6">c</i><i class="w3">t</i><i class="w4">r</i><i class="w3">l</i><i class="w7">_</i><i class="w9">w</i><i class="w7">e</i><i class="w7">a</i><i class="w6">k</i></div>
<div class="a" style="left:204px;top:561px;width:98px;height:18px;background:#cccccc"></div>
<div class="a" style="left:301px;top:561px;width:1px;height:18px;background:#7a8a99"></div>
<div class="a" style="left:204px;top:578px;width:98px;height:1px;background:#7a8a99"></div>
<div class="t" style="left:205px;top:564px;font-weight:normal;color:#000"><i class="w9">D</i><i class="w4">r</i><i class="w3">i</i><i class="w5">v</i><i class="w7">e</i><i class="w4">r</i></div>
</div></div>
<div class="a" style="left:3px;top:180px;width:431px;height:392px;box-shadow:inset 0 0 0 1px #7a8a99"></div>
<div class="a" style="left:4px;top:572px;width:431px;height:1px;background:#ffffff"></div>
<div class="a" style="left:434px;top:181px;width:1px;height:392px;background:#ffffff"></div>
<div class="a" style="left:419px;top:201px;width:14px;height:370px;background:#eeeeee"></div>
<div class="a" style="left:418px;top:201px;width:1px;height:370px;background:#7a8a99"></div>
<div class="a" style="left:419px;top:201px;width:14px;height:1px;background:#ffffff"></div>
<div class="a" style="left:419px;top:201px;width:1px;height:15px;background:#ffffff"></div>
<div class="a" style="left:433px;top:206px;width:1px;height:1px;background:#ffffff"></div>
<svg class="a" style="left:422px;top:206px" width="8" height="4" viewBox="0 0 8 4"><path d="M0 4 H8 L4 0 Z" fill="#333"/></svg>
<div class="a" style="left:419px;top:217px;width:14px;height:186px;background:linear-gradient(90deg, #dde8f3 0%, #ffffff 30%, #dde8f3 60%, #b8cfe5 100%)"></div>
<div class="a" style="left:418px;top:216px;width:15px;height:1px;background:#6382bf"></div>
<div class="a" style="left:418px;top:403px;width:15px;height:1px;background:#6382bf"></div>
<div class="a" style="left:418px;top:216px;width:1px;height:188px;background:#6382bf"></div>
<div class="a" style="left:422px;top:308px;width:9px;height:1px;background:#6382bf"></div>
<div class="a" style="left:423px;top:309px;width:9px;height:1px;background:#ffffff"></div>
<div class="a" style="left:422px;top:310px;width:9px;height:1px;background:#6382bf"></div>
<div class="a" style="left:423px;top:311px;width:9px;height:1px;background:#ffffff"></div>
<div class="a" style="left:422px;top:312px;width:9px;height:1px;background:#6382bf"></div>
<div class="a" style="left:423px;top:313px;width:9px;height:1px;background:#ffffff"></div>
<div class="a" style="left:419px;top:404px;width:1px;height:151px;background:#c8d8e8"></div>
<div class="a" style="left:419px;top:555px;width:14px;height:1px;background:#7a8a99"></div>
<div class="a" style="left:419px;top:556px;width:14px;height:1px;background:#ffffff"></div>
<div class="a" style="left:419px;top:556px;width:1px;height:15px;background:#ffffff"></div>
<svg class="a" style="left:422px;top:562px" width="8" height="4" viewBox="0 0 8 4"><path d="M0 0 H8 L4 4 Z" fill="#333"/></svg>
<div class="a" style="left:419px;top:570px;width:14px;height:1px;background:#7a8a99"></div>
<div class="a" style="left:435px;top:301px;width:32px;height:32px;background:#eeeeee"></div>
<div class="a" style="left:435px;top:301px;width:32px;height:32px;box-shadow:inset 0 0 0 1px #999999"></div>
<svg class="a" style="left:447px;top:313px" width="6" height="10" viewBox="0 0 6 10"><path d="M0 0 L5 5 L0 10 Z" fill="#b0b0b0"/></svg>
<div class="a" style="left:435px;top:333px;width:32px;height:32px;background:#eeeeee"></div>
<div class="a" style="left:435px;top:333px;width:32px;height:32px;box-shadow:inset 0 0 0 1px #999999"></div>
<svg class="a" style="left:447px;top:345px" width="6" height="10" viewBox="0 0 6 10"><path d="M5 0 L0 5 L5 10 Z" fill="#b0b0b0"/></svg>
<div class="a" style="left:435px;top:365px;width:32px;height:32px;background:linear-gradient(#dde8f3 0%, #ffffff 30%, #dde8f3 60%, #b8cfe5 100%)"></div>
<div class="a" style="left:435px;top:365px;width:32px;height:32px;box-shadow:inset 0 0 0 1px #7a8a99"></div>
<div class="a" style="left:442px;top:372px;width:19px;height:19px;box-shadow:inset 0 0 0 1px #a3b8cc"></div>
<svg class="a" style="left:444px;top:376px" width="12" height="11" viewBox="0 0 12 11"><path d="M1 0.5 L6 5.5 L1 10.5 Z M6 0.5 L11 5.5 L6 10.5 Z" fill="#000080"/></svg>
<div class="a" style="left:435px;top:397px;width:32px;height:32px;background:linear-gradient(#dde8f3 0%, #ffffff 30%, #dde8f3 60%, #b8cfe5 100%)"></div>
<div class="a" style="left:435px;top:397px;width:32px;height:32px;box-shadow:inset 0 0 0 1px #7a8a99"></div>
<svg class="a" style="left:444px;top:408px" width="12" height="11" viewBox="0 0 12 11"><path d="M6 0.5 L1 5.5 L6 10.5 Z M11 0.5 L6 5.5 L11 10.5 Z" fill="#000080"/></svg>
<div class="a" style="left:435px;top:429px;width:32px;height:32px;background:linear-gradient(#dde8f3 0%, #ffffff 30%, #dde8f3 60%, #b8cfe5 100%)"></div>
<div class="a" style="left:435px;top:429px;width:32px;height:32px;box-shadow:inset 0 0 0 1px #7a8a99"></div>
<svg class="a" style="left:444px;top:440px" width="12" height="11" viewBox="0 0 12 11"><path d="M1 0.5 L6 5.5 L1 10.5 Z M11 0.5 L6 5.5 L11 10.5 Z" fill="#000080"/></svg>
<div class="a" style="left:468px;top:180px;width:429px;height:392px;background:#eeeeee"></div>
<div class="a" style="left:468px;top:180px;width:96px;height:20px;background:#eeeeee"></div>
<div class="a" style="left:468px;top:180px;width:95px;height:1px;background:#ffffff"></div>
<div class="a" style="left:468px;top:180px;width:1px;height:19px;background:#ffffff"></div>
<div class="a" style="left:563px;top:180px;width:1px;height:20px;background:#7a8a99"></div>
<div class="a" style="left:469px;top:199px;width:95px;height:1px;background:#7a8a99"></div>
<div class="t" style="left:486px;top:185px;font-weight:normal;color:#000"><i class="w7">L</i><i class="w7">o</i><i class="w7">g</i><i class="w3">i</i><i class="w6">c</i><i class="w7">a</i><i class="w3">l</i><i class="w3"> </i><i class="w8">P</i><i class="w3">i</i><i class="w7">n</i></div>
<div class="a" style="left:564px;top:180px;width:104px;height:20px;background:#eeeeee"></div>
<div class="a" style="left:564px;top:180px;width:103px;height:1px;background:#ffffff"></div>
<div class="a" style="left:564px;top:180px;width:1px;height:19px;background:#ffffff"></div>
<div class="a" style="left:667px;top:180px;width:1px;height:20px;background:#7a8a99"></div>
<div class="a" style="left:565px;top:199px;width:103px;height:1px;background:#7a8a99"></div>
<div class="t" style="left:582px;top:185px;font-weight:normal;color:#000"><i class="w9">M</i><i class="w7">o</i><i class="w7">d</i><i class="w7">e</i><i class="w3">l</i><i class="w3"> </i><i class="w9">N</i><i class="w7">a</i><i class="w11">m</i><i class="w7">e</i></div>
<div class="a" style="left:668px;top:180px;width:98px;height:20px;background:#eeeeee"></div>
<div class="a" style="left:668px;top:180px;width:97px;height:1px;background:#ffffff"></div>
<div class="a" style="left:668px;top:180px;width:1px;height:19px;background:#ffffff"></div>
<div class="a" style="left:765px;top:180px;width:1px;height:20px;background:#7a8a99"></div>
<div class="a" style="left:669px;top:199px;width:97px;height:1px;background:#7a8a99"></div>
<div class="t" style="left:687px;top:185px;font-weight:normal;color:#000"><i class="w9">M</i><i class="w7">o</i><i class="w7">d</i><i class="w7">e</i><i class="w3">l</i><i class="w3"> </i><i class="w7">T</i><i class="w5">y</i><i class="w7">p</i><i class="w7">e</i></div>
<div class="a" style="left:468px;top:200px;width:96px;height:18px;background:#cccccc"></div>
<div class="a" style="left:563px;top:200px;width:1px;height:18px;background:#7a8a99"></div>
<div class="a" style="left:468px;top:217px;width:96px;height:1px;background:#7a8a99"></div>
<div class="t" style="left:469px;top:203px;font-weight:normal;color:#000"><i class="w9">D</i><i class="w9">Q</i><i class="w3">[</i><i class="w7">6</i><i class="w7">3</i><i class="w3">:</i><i class="w7">0</i><i class="w3">]</i></div>
<div class="a" style="left:564px;top:200px;width:104px;height:18px;background:#cccccc"></div>
<div class="a" style="left:667px;top:200px;width:1px;height:18px;background:#7a8a99"></div>
<div class="a" style="left:564px;top:217px;width:104px;height:1px;background:#7a8a99"></div>
<div class="t" style="left:565px;top:203px;font-weight:normal;color:#000"><i class="w7">d</i><i class="w7">q</i><i class="w7">_</i><i class="w9">w</i><i class="w7">e</i><i class="w7">a</i><i class="w6">k</i></div>
<div class="a" style="left:668px;top:200px;width:98px;height:18px;background:#cccccc"></div>
<div class="a" style="left:765px;top:200px;width:1px;height:18px;background:#7a8a99"></div>
<div class="a" style="left:668px;top:217px;width:98px;height:1px;background:#7a8a99"></div>
<div class="t" style="left:669px;top:203px;font-weight:normal;color:#000"><i class="w3">I</i><i class="w3">/</i><i class="w9">O</i></div>
<div class="a" style="left:467px;top:179px;width:431px;height:394px;box-shadow:inset 0 0 0 1px #7a8a99"></div>
<div class="a" style="left:468px;top:573px;width:431px;height:1px;background:#ffffff"></div>
<div class="a" style="left:898px;top:180px;width:1px;height:394px;background:#ffffff"></div>
<div class="a" style="left:897px;top:205px;width:1px;height:1px;background:#ffffff"></div>
<div class="a" style="left:81px;top:574px;width:237px;height:25px;background:#ffffff"></div>
<div class="a" style="left:81px;top:574px;width:236px;height:24px;box-shadow:inset 0 0 0 1px #7a8a99"></div>
<div class="a" style="left:317px;top:575px;width:1px;height:24px;background:#ffffff"></div>
<div class="a" style="left:82px;top:598px;width:236px;height:1px;background:#ffffff"></div>
<div class="a" style="left:318px;top:573px;width:117px;height:26px;background:#b8cfe5"></div>
<div class="a" style="left:318px;top:573px;width:117px;height:26px;box-shadow:inset 0 0 0 1px #7a8a99"></div>
<div class="t" style="left:3px;top:581px;font-weight:bold;color:#333333"><i class="w12">W</i><i class="w3">i</i><i class="w3">l</i><i class="w7">d</i><i class="w7">c</i><i class="w7">a</i><i class="w5">r</i><i class="w7">d</i><i class="w3"> </i><i class="w7">L</i><i class="w3">i</i><i class="w7">s</i><i class="w4">t</i><i class="w3">:</i></div>
<div class="t" style="left:339px;top:581px;font-weight:bold;color:#333333"><i class="w12">W</i><i class="w3">i</i><i class="w3">l</i><i class="w7">d</i><i class="w7">c</i><i class="w7">a</i><i class="w5">r</i><i class="w7">d</i><i class="w3"> </i><i class="w3">I</i><i class="w7">s</i><i class="w3"> </i><i class="w3">.</i><i class="w3">.</i><i class="w3">.</i></div>
<div class="t" style="left:107px;top:603px;font-weight:bold;color:#333333"><i class="w8">G</i><i class="w7">e</i><i class="w7">n</i><i class="w7">e</i><i class="w5">r</i><i class="w7">a</i><i class="w4">t</i><i class="w7">e</i><i class="w3"> </i><i class="w8">U</i><i class="w7">s</i><i class="w7">e</i><i class="w7">d</i><i class="w3"> </i><i class="w8">P</i><i class="w3">i</i><i class="w7">n</i><i class="w3"> </i><i class="w3">I</i><i class="w7">n</i><i class="w4">f</i><i class="w7">o</i><i class="w5">r</i><i class="w11">m</i><i class="w7">a</i><i class="w4">t</i><i class="w3">i</i><i class="w7">o</i><i class="w7">n</i></div>
<div class="a" style="left:284px;top:602px;width:13px;height:13px;background:linear-gradient(#ffffff 0%, #f4f8fc 20%, #dde8f3 55%, #c8daec 100%)"></div>
<div class="a" style="left:284px;top:602px;width:13px;height:13px;box-shadow:inset 0 0 0 1px #7a8a99"></div>
<div class="t" style="left:62px;top:618px;font-weight:bold;color:#999999"><i class="w8">H</i><i class="w3">i</i><i class="w7">d</i><i class="w7">e</i><i class="w3"> </i><i class="w8">P</i><i class="w3">i</i><i class="w7">n</i><i class="w7">s</i><i class="w3"> </i><i class="w8">U</i><i class="w7">s</i><i class="w7">e</i><i class="w7">d</i><i class="w3"> </i><i class="w8">B</i><i class="w6">y</i><i class="w3"> </i><i class="w9">O</i><i class="w4">t</i><i class="w7">h</i><i class="w7">e</i><i class="w5">r</i><i class="w3"> </i><i class="w7">T</i><i class="w5">r</i><i class="w7">a</i><i class="w7">n</i><i class="w7">s</i><i class="w4">f</i><i class="w7">e</i><i class="w5">r</i><i class="w3"> </i><i class="w8">N</i><i class="w7">e</i><i class="w4">t</i><i class="w7">s</i></div>
<div class="a" style="left:284px;top:617px;width:13px;height:13px;background:#eeeeee"></div>
<div class="a" style="left:284px;top:617px;width:13px;height:13px;box-shadow:inset 0 0 0 1px #7a8a99"></div>
<div class="t" style="left:385px;top:603px;font-weight:bold;color:#333333"><i class="w8">C</i><i class="w7">o</i><i class="w3">l</i><i class="w3">l</i><i class="w7">a</i><i class="w7">p</i><i class="w7">s</i><i class="w7">e</i><i class="w3"> </i><i class="w7">L</i><i class="w3">i</i><i class="w7">s</i><i class="w4">t</i><i class="w7">s</i><i class="w3"> </i><i class="w3">i</i><i class="w7">n</i><i class="w4">t</i><i class="w7">o</i><i class="w3"> </i><i class="w8">V</i><i class="w7">e</i><i class="w7">c</i><i class="w4">t</i><i class="w7">o</i><i class="w5">r</i><i class="w3"> </i><i class="w8">N</i><i class="w7">o</i><i class="w4">t</i><i class="w7">a</i><i class="w4">t</i><i class="w3">i</i><i class="w7">o</i><i class="w7">n</i></div>
<div class="a" style="left:584px;top:602px;width:13px;height:13px;background:linear-gradient(#ffffff 0%, #f4f8fc 20%, #dde8f3 55%, #c8daec 100%)"></div>
<div class="a" style="left:584px;top:602px;width:13px;height:13px;box-shadow:inset 0 0 0 1px #7a8a99"></div>
<div class="a" style="left:587px;top:607px;width:2px;height:5px;background:#222"></div>
<div class="a" style="left:593px;top:605px;width:1px;height:2px;background:#222"></div>
<div class="a" style="left:592px;top:606px;width:1px;height:2px;background:#222"></div>
<div class="a" style="left:591px;top:607px;width:1px;height:2px;background:#222"></div>
<div class="a" style="left:590px;top:608px;width:1px;height:2px;background:#222"></div>
<div class="a" style="left:589px;top:609px;width:1px;height:2px;background:#222"></div>
<div class="a" style="left:388px;top:634px;width:51px;height:27px;background:linear-gradient(#dde8f3 0%, #ffffff 30%, #dde8f3 60%, #b8cfe5 100%)"></div>
<div class="a" style="left:388px;top:634px;width:51px;height:27px;box-shadow:inset 0 0 0 2px #7a8a99"></div>
<div class="t" style="left:405px;top:642px;font-weight:bold;color:#333333"><i class="w9">O</i><i class="w8">K</i></div>
<div class="a" style="left:439px;top:634px;width:73px;height:27px;background:linear-gradient(#dde8f3 0%, #ffffff 30%, #dde8f3 60%, #b8cfe5 100%)"></div>
<div class="a" style="left:439px;top:634px;width:73px;height:27px;box-shadow:inset 0 0 0 1px #7a8a99"></div>
<div class="t" style="left:456px;top:642px;font-weight:bold;color:#333333"><i class="w8">C</i><i class="w7">a</i><i class="w7">n</i><i class="w7">c</i><i class="w7">e</i><i class="w3">l</i></div>
</body></html>
